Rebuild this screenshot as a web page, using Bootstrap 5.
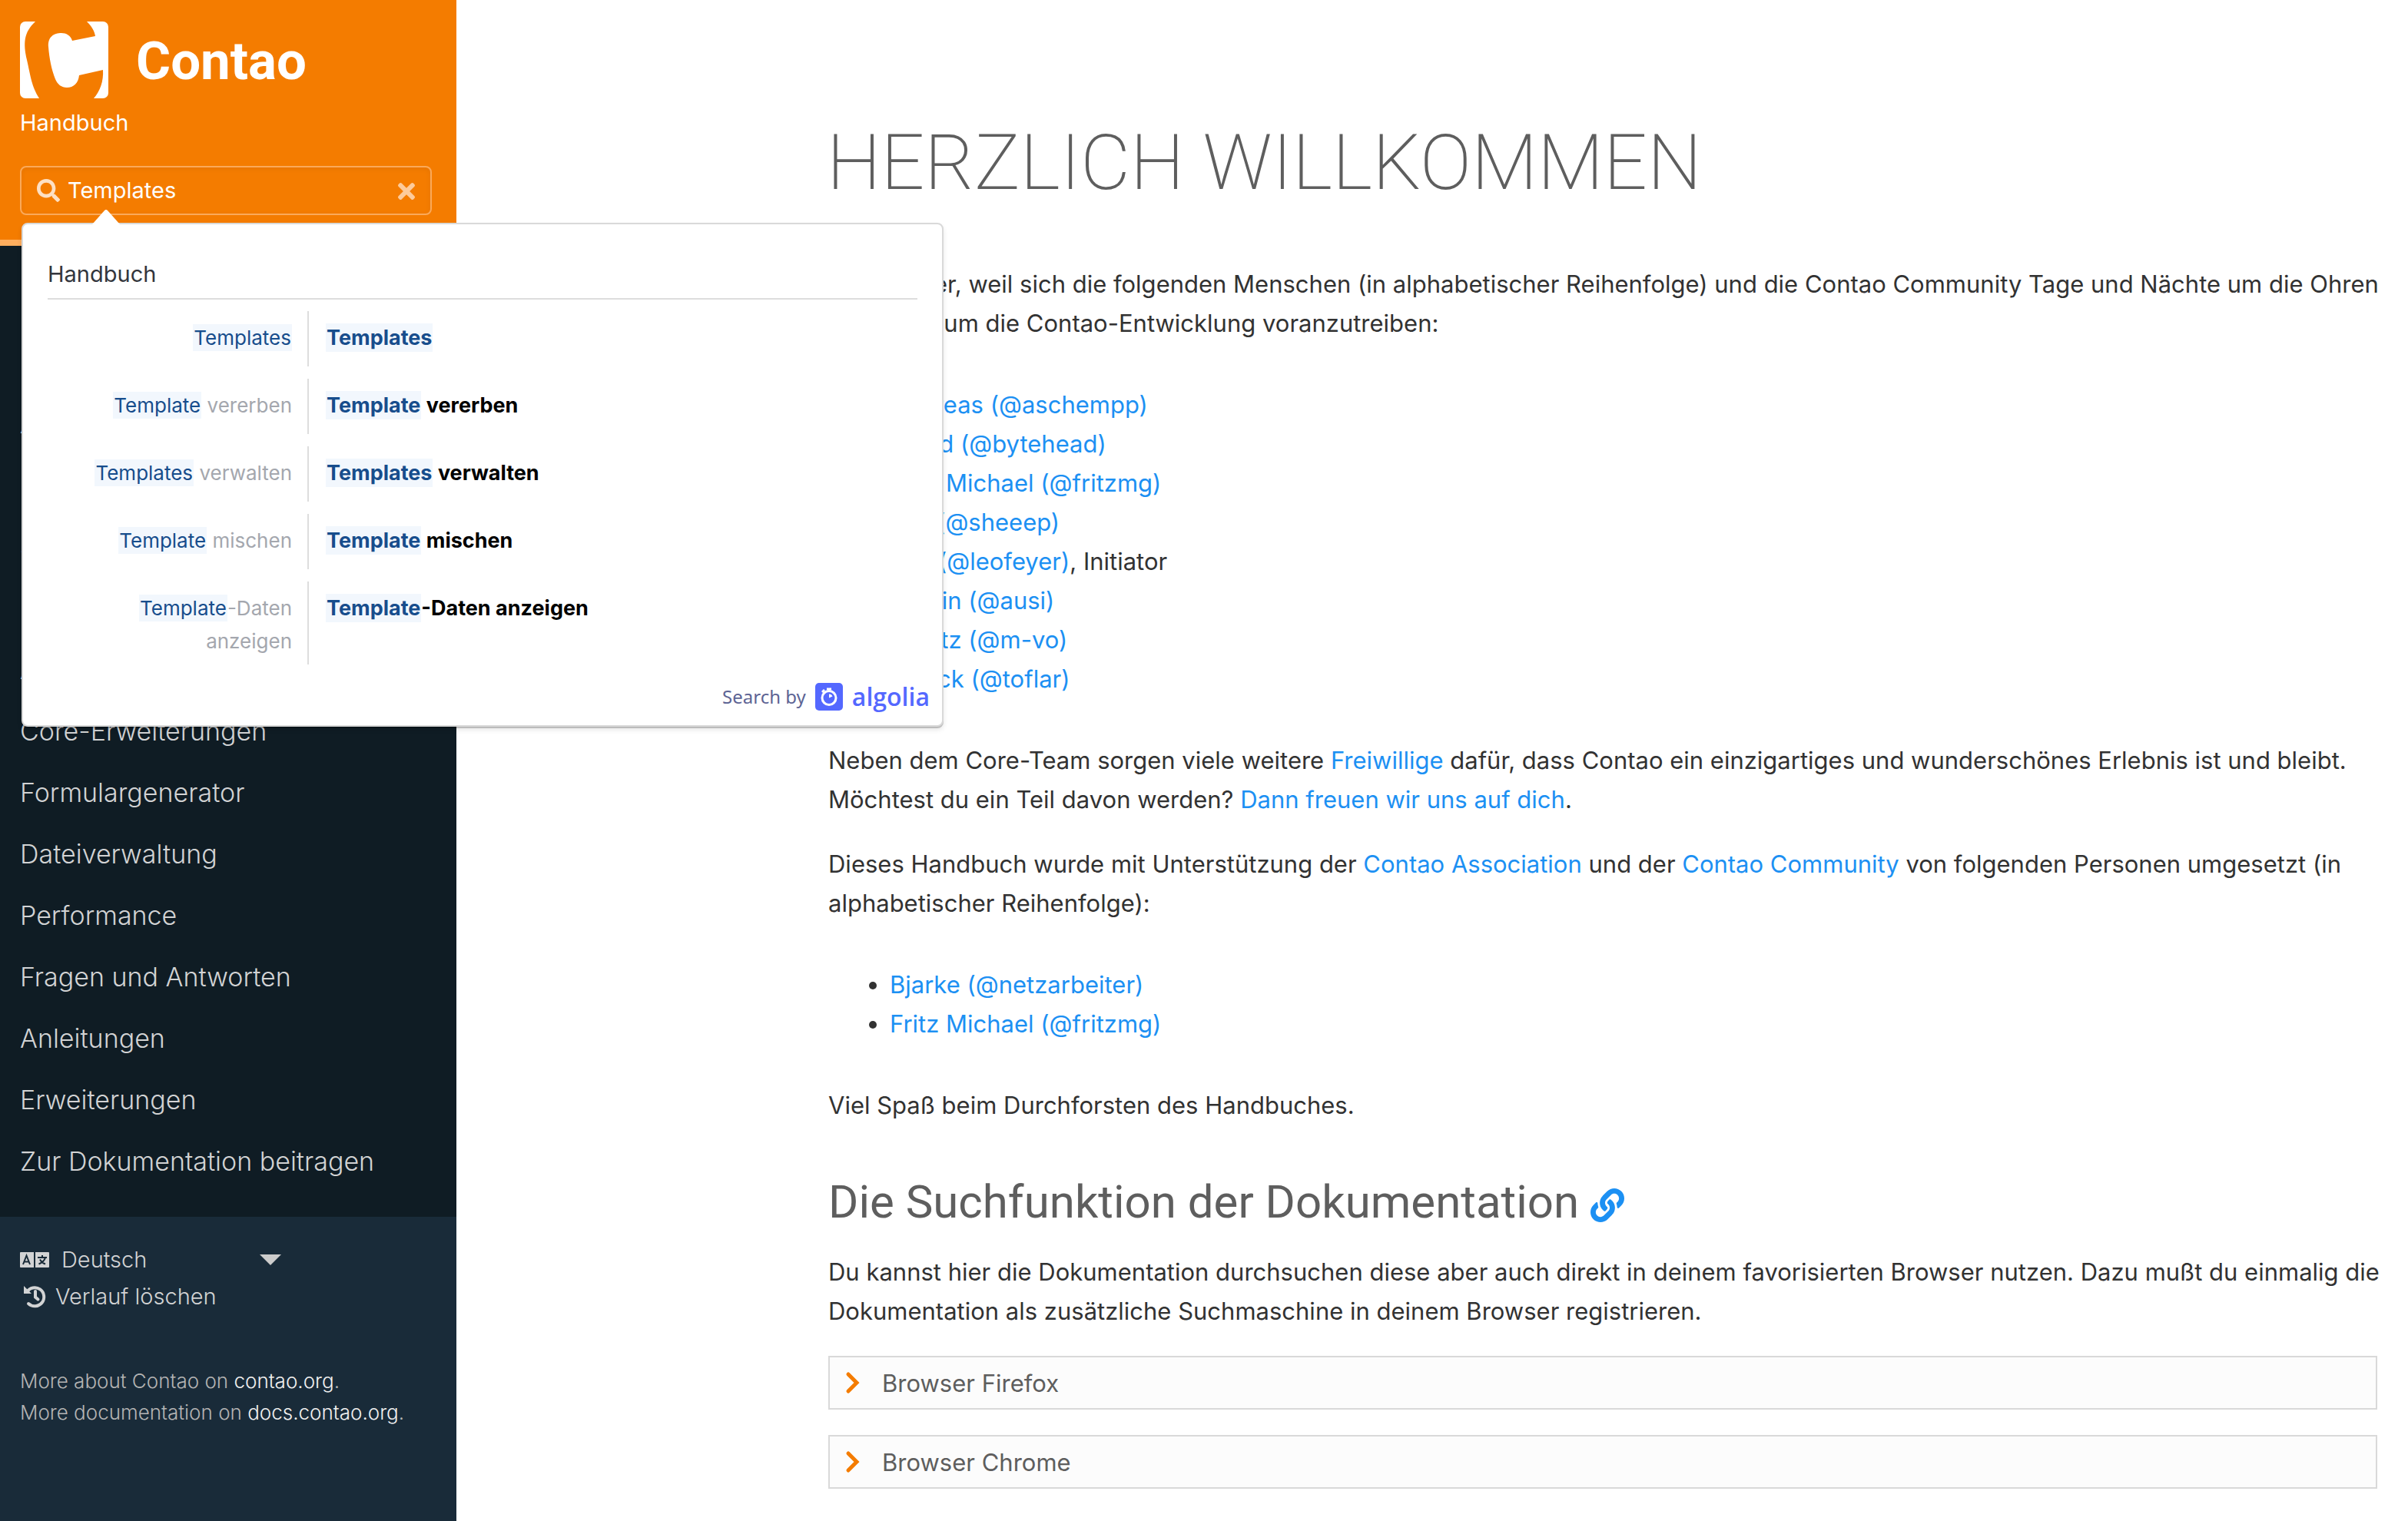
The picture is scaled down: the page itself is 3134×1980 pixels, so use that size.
<!DOCTYPE html>
<html lang="de">
<head>
<meta charset="utf-8">
<meta name="viewport" content="width=device-width, initial-scale=1">
<title>Contao Handbuch</title>
<link href="https://cdn.jsdelivr.net/npm/bootstrap@5.3.0/dist/css/bootstrap.min.css" rel="stylesheet">
<style>
body{font-family:Inter,"Noto Sans",sans-serif;font-size:31px;line-height:51px;color:#323232;background:#fff}
a{color:#1c90f3;text-decoration:none}
.sidebar{width:594px;background:#0f1c24;min-height:100vh}
.brand-head{background:#f47c00;border-bottom:8px solid #ffae5e;height:320px;padding:28px 32px 0 26px;color:#fff}
.brand-row{gap:36px}
.brand-name{font:700 69px/104px Roboto,sans-serif;height:100px}
.brand-sub{font-size:29px;line-height:40px;margin-top:12px}
.searchbox{height:64px;margin-top:36px;padding:0 20px;gap:10px;border:2px solid #faa95a;border-radius:8px;box-shadow:inset 0 2px 6px rgba(0,0,0,.06)}
.searchbox input{font-size:29px;line-height:40px;color:#fff;background:none;border:0;outline:0;padding:0;min-width:0}
.searchbox button{border:0;background:none;padding:0;line-height:1}
.topics{padding:32px 26px}
.topics a{color:#d2d3d4;font-size:34px;line-height:80px;font-weight:300;display:block}
.side-foot{background:#192b39;color:#b4b4b4;padding:32px 26px;font-size:26px;line-height:41px;font-weight:300}
.side-foot select,.side-foot button{font-size:29px;line-height:48px;font-weight:300;color:#d2d3d4;background:none;border:0;padding:0;appearance:none;height:48px}
.side-foot select{width:250px}
.side-foot a{color:#f0f0f0}
.lang-wrap{gap:16px}
.clear-history{gap:10px}
.caret{width:28px;height:14px;margin-left:-8px}
.foot-notes{margin-top:65px}
.page-main{padding:156px 40px 38px 484px;min-width:0}
h1{font-family:Roboto,sans-serif;font-size:100px;line-height:112px;font-weight:200;color:#5e5e5e;margin:0 0 76px -2px}
h2{font-family:Roboto,sans-serif;font-size:60px;line-height:80px;font-weight:400;color:#5e5e5e;margin:61px 0 25px}
.page-main p{margin:0 -16px 33px 0}
.page-main ul{margin:55px 0;padding-left:80px}
.fold{border:2px solid #d9d9d9;background:#fcfcfc;height:70px;margin-bottom:33px;padding:0 20px;gap:26px;color:#5e5e5e;width:100%;text-align:left}
.hits{position:absolute;left:28px;top:290px;width:1200px;background:#fff;border:2px solid #d9d9d9;border-radius:8px;padding:45px 32px 0;box-shadow:0 2px 0 rgba(0,0,0,.2),0 4px 6px rgba(0,0,0,.1);z-index:5}
.hits-tip{position:absolute;left:90px;top:-20px;width:36px;height:22px}
.hits-head{font-size:29px;line-height:40px;color:#33363d;border-bottom:2px solid #ddd;padding-bottom:11px;margin-bottom:15px}
.hit{display:flex;margin-bottom:16px;color:#000;line-height:43px}
.hit-cat{width:338px;padding:13px 20px 9px 0;text-align:right;color:#a4a7ae;font-size:26px;flex:none}
.hit-title{border-left:2px solid #ddd;padding:13px 0 16px 22px;font-weight:700;font-size:27px}
.hit b{font-weight:inherit;color:#174d8c;background:#f2f7fd;padding:2px 1px}
.powered{margin:24px -16px 19px 0;color:#5d6494;font:24px/36px "Noto Sans",sans-serif;gap:12px}
.powered strong{color:#5468ff;font:600 32px/36px "Open Sans","Noto Sans",sans-serif}
</style>
</head>
<body>
<div class="d-flex position-relative">
<aside class="sidebar flex-shrink-0 d-flex flex-column">
<header class="brand-head">
<div class="brand-row d-flex align-items-center">
<svg width="115" height="100" viewBox="0 0 115 100"><rect width="115" height="100" rx="7" fill="#fff"/><path fill="#f47c00" d="M20 0H87C93 6 97 12 98 19L68 25C66 18 60 15 54 15C44 15 36 20 37 33C38 47 41 63 46 75C49 82 54 86 61 86C70 86 76 80 77 70L108 63C109 78 104 91 96 100H25C15 84 14 72 9 50C4 28 5 14 20 0Z"/></svg>
<span class="brand-name">Contao</span>
</div>
<div class="brand-sub">Handbuch</div>
<div class="searchbox d-flex align-items-center">
<label for="q" class="d-flex"><svg width="30" height="30" viewBox="0 0 512 512" fill="#fde0c4"><path d="M505 442.7L405.3 343c-4.500-4.500-10.600-7-17-7H372c27.600-35.300 44-79.700 44-128C416 93.100 322.900 0 208 0S0 93.100 0 208s93.100 208 208 208c48.300 0 92.700-16.400 128-44v16.300c0 6.400 2.500 12.500 7 17l99.700 99.700c9.400 9.400 24.600 9.400 33.900 0l28.300-28.300c9.400-9.400 9.400-24.600.1-34zM208 336c-70.700 0-128-57.200-128-128 0-70.700 57.200-128 128-128 70.700 0 128 57.200 128 128 0 70.700-57.200 128-128 128z"/></svg></label>
<input id="q" type="text" class="flex-grow-1" value="Templates" aria-label="Suche">
<button type="button" aria-label="Leeren"><svg width="22" height="32" viewBox="0 0 352 512" fill="#fdcb9b"><path d="M242.72 256l100.070-100.070c12.280-12.280 12.280-32.190 0-44.480l-22.240-22.240c-12.280-12.280-32.190-12.280-44.480 0L176 189.280 75.930 89.210c-12.280-12.280-32.190-12.280-44.480 0L9.210 111.450c-12.280 12.280-12.280 32.190 0 44.480L109.280 256 9.210 356.070c-12.280 12.280-12.280 32.190 0 44.480l22.240 22.240c12.280 12.280 32.200 12.280 44.480 0L176 322.720l100.070 100.070c12.280 12.280 32.200 12.280 44.480 0l22.240-22.240c12.280-12.280 12.280-32.190 0-44.480L242.720 256z"/></svg></button>
</div>
</header>
<nav class="topics">
<a href="#">Einführung</a><a href="#">Installation</a><a href="#">Administrationsbereich</a><a href="#">Layout</a><a href="#">Seitenstruktur</a><a href="#">Inhalte</a><a href="#">Artikelverwaltung</a><a href="#">Core-Erweiterungen</a><a href="#">Formulargenerator</a><a href="#">Dateiverwaltung</a><a href="#">Performance</a><a href="#">Fragen und Antworten</a><a href="#">Anleitungen</a><a href="#">Erweiterungen</a><a href="#">Zur Dokumentation beitragen</a>
</nav>
<footer class="side-foot flex-grow-1">
<div class="d-flex align-items-center lang-wrap">
<label for="lang" class="d-flex"><svg width="38" height="20" viewBox="0 0 38 20"><path fill="#d2d3d4" d="M1 0H18V20H1a1 1 0 0 1-1-1V1a1 1 0 0 1 1-1ZM20 0H37a1 1 0 0 1 1 1V19a1 1 0 0 1-1 1H20Z"/><g fill="none" stroke="#192b39" stroke-width="2"><path d="M4 16 8.500 4.500 13 16M5.500 12.500H11.500M23 7H35M29 4V7M33 7C32 11 28 14 24.500 15.500M26 9.500C27.500 12.500 30 14.500 33 15.500"/></g></svg></label>
<select id="lang" aria-label="Sprache"><option>Deutsch</option></select>
<svg class="caret" viewBox="0 0 28 14"><path d="M0 0H28L14 14Z" fill="#ccc"/></svg>
</div>
<button type="button" class="clear-history d-flex align-items-center"><svg class="ms-1" width="32" height="32" viewBox="0 0 32 32" fill="none" stroke="#d2d3d4"><path d="M5 10A12 12 0 1 1 7 25" stroke-width="4" stroke-linecap="round"/><path d="M1 2V12H11Z" fill="#d2d3d4" stroke="none"/><path d="M16 9V16.500L19.500 19.500" stroke-width="4" stroke-linecap="round"/></svg>Verlauf löschen</button>
<div class="foot-notes">More about Contao on <a href="#">contao.org</a>.<br>More documentation on <a href="#">docs.contao.org</a>.</div>
</footer>
</aside>
<main class="page-main flex-grow-1">
<h1>HERZLICH WILLKOMMEN</h1>
<p>Du bist hier, weil sich die folgenden Menschen (in alphabetischer Reihenfolge) und die Contao Community Tage und Nächte um die Ohren schlagen, um die Contao-Entwicklung voranzutreiben:</p>
<ul><li><a href="#">Andreas (@aschempp)</a></li><li><a href="#">David (@bytehead)</a></li><li><a href="#">Fritz Michael (@fritzmg)</a></li><li><a href="#">Jim (@sheeep)</a></li><li><a href="#">Leo (@leofeyer)</a>, Initiator</li><li><a href="#">Martin (@ausi)</a></li><li><a href="#">Moritz (@m-vo)</a></li><li><a href="#">Yanick (@toflar)</a></li></ul>
<p>Neben dem Core-Team sorgen viele weitere <a href="#">Freiwillige</a> dafür, dass Contao ein einzigartiges und wunderschönes Erlebnis ist und bleibt. Möchtest du ein Teil davon werden? <a href="#">Dann freuen wir uns auf dich</a>.</p>
<p>Dieses Handbuch wurde mit Unterstützung der <a href="#">Contao Association</a> und der <a href="#">Contao Community</a> von folgenden Personen umgesetzt (in alphabetischer Reihenfolge):</p>
<ul><li><a href="#">Bjarke (@netzarbeiter)</a></li><li><a href="#">Fritz Michael (@fritzmg)</a></li></ul>
<p>Viel Spaß beim Durchforsten des Handbuches.</p>
<h2>Die Suchfunktion der Dokumentation <a href="#" aria-label="Link zum Abschnitt"><svg width="44" height="44" viewBox="0 0 512 512" fill="#1c90f3"><path d="M326.612 185.391c59.747 59.809 58.927 155.698.36 214.590-.11.12-.24.25-.36.37l-67.200 67.200c-59.270 59.270-155.699 59.262-214.960 0-59.270-59.260-59.270-155.700 0-214.960l37.106-37.106c9.840-9.840 26.786-3.300 27.294 10.606.648 17.722 3.826 35.527 9.690 52.721 1.986 5.822.567 12.262-3.783 16.612l-13.087 13.087c-28.026 28.026-28.905 73.660-1.155 101.960 28.024 28.579 74.086 28.749 102.325.51l67.200-67.190c28.191-28.191 28.073-73.757 0-101.830-3.701-3.694-7.429-6.564-10.341-8.569a16.037 16.037 0 0 1-6.947-12.606c-.396-10.567 3.348-21.456 11.698-29.806l21.054-21.055c5.521-5.521 14.182-6.199 20.584-1.731a152.482 152.482 0 0 1 20.522 17.197zM467.547 44.449c-59.261-59.262-155.690-59.270-214.960 0l-67.200 67.200c-.12.12-.25.25-.36.37-58.566 58.892-59.387 154.781.36 214.590a152.454 152.454 0 0 0 20.521 17.196c6.402 4.468 15.064 3.789 20.584-1.731l21.054-21.055c8.350-8.350 12.094-19.239 11.698-29.806a16.037 16.037 0 0 0-6.947-12.606c-2.912-2.005-6.640-4.875-10.341-8.569-28.073-28.073-28.191-73.639 0-101.830l67.200-67.190c28.239-28.239 74.300-28.069 102.325.51 27.750 28.300 26.872 73.934-1.155 101.960l-13.087 13.087c-4.350 4.350-5.769 10.790-3.783 16.612 5.864 17.194 9.042 34.999 9.690 52.721.509 13.906 17.454 20.446 27.294 10.606l37.106-37.106c59.271-59.259 59.271-155.699.001-214.959z"/></svg></a></h2>
<p>Du kannst hier die Dokumentation durchsuchen diese aber auch direkt in deinem favorisierten Browser nutzen. Dazu mußt du einmalig die Dokumentation als zusätzliche Suchmaschine in deinem Browser registrieren.</p>
<button type="button" class="fold d-flex align-items-center"><svg width="22" height="30" viewBox="0 0 22 30" fill="none" stroke="#f47c00" stroke-width="5" stroke-linecap="round"><path d="M4 4 15 15 4 26"/></svg>Browser Firefox</button>
<button type="button" class="fold d-flex align-items-center"><svg width="22" height="30" viewBox="0 0 22 30" fill="none" stroke="#f47c00" stroke-width="5" stroke-linecap="round"><path d="M4 4 15 15 4 26"/></svg>Browser Chrome</button>
</main>
<section class="hits" aria-label="Suchergebnisse">
<svg class="hits-tip" viewBox="0 0 36 22"><path d="M0 20 16 2Q18 0 20 2L36 20V22H0Z" fill="#fff"/></svg>
<div class="hits-head">Handbuch</div>
<a href="#" class="hit"><span class="hit-cat"><b>Templates</b></span><span class="hit-title"><b>Templates</b></span></a>
<a href="#" class="hit"><span class="hit-cat"><b>Template</b> vererben</span><span class="hit-title"><b>Template</b> vererben</span></a>
<a href="#" class="hit"><span class="hit-cat"><b>Templates</b> verwalten</span><span class="hit-title"><b>Templates</b> verwalten</span></a>
<a href="#" class="hit"><span class="hit-cat"><b>Template</b> mischen</span><span class="hit-title"><b>Template</b> mischen</span></a>
<a href="#" class="hit"><span class="hit-cat"><b>Template</b>-Daten anzeigen</span><span class="hit-title"><b>Template</b>-Daten anzeigen</span></a>
<div class="powered d-flex justify-content-end align-items-center">Search by
<svg width="36" height="36" viewBox="0 0 36 36"><rect width="36" height="36" rx="5" fill="#5468ff"/><circle cx="18" cy="19.500" r="9" fill="none" stroke="#fff" stroke-width="3"/><path d="M15 6.500h6v3h-6zM8 11l3-3 2 2-3 3zM18 19.500V14.500a5 5 0 0 1 4.500 3z" fill="#fff"/></svg>
<strong>algolia</strong></div>
</section>
</div>
<script src="https://cdn.jsdelivr.net/npm/bootstrap@5.3.0/dist/js/bootstrap.bundle.min.js"></script>
</body>
</html>
